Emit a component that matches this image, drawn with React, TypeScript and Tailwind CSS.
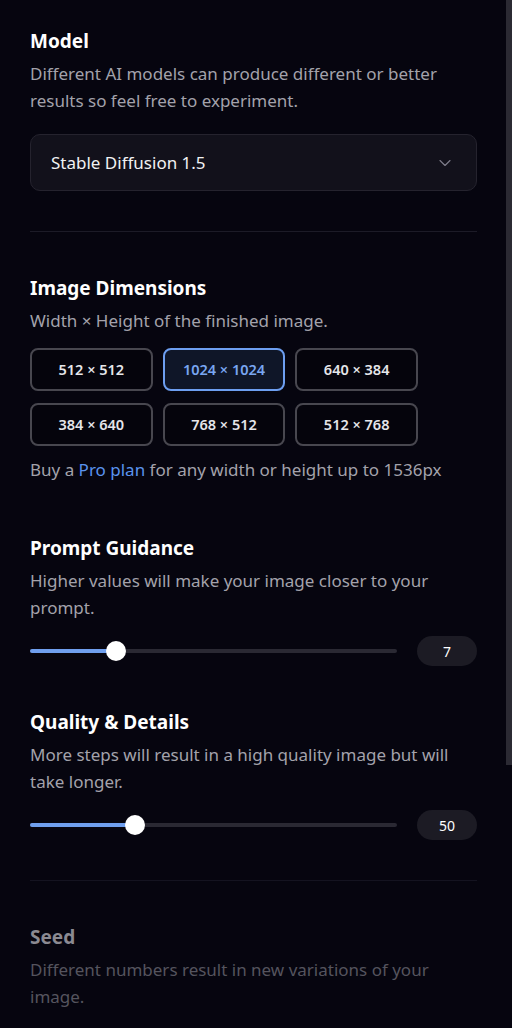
import React from "react";
import { ChevronDown } from "lucide-react";

const font = { fontFamily: '"Noto Sans", "Open Sans", sans-serif' };

function Title({ children, dim }: { children: React.ReactNode; dim?: boolean }) {
  return (
    <h2 className={`text-[19px] leading-[26px] font-bold ${dim ? "text-[#8b8a92]" : "text-white"}`}>{children}</h2>
  );
}

function Desc({ children, dim }: { children: React.ReactNode; dim?: boolean }) {
  return (
    <p className={`mt-[6px] text-[17px] leading-[27px] ${dim ? "text-[#55545e]" : "text-[#a3a2ab]"}`}>{children}</p>
  );
}

function Slider({ pct, value }: { pct: number; value: string }) {
  return (
    <div className="mt-[15px] flex items-center gap-5">
      <div className="relative h-[4px] flex-1 rounded-full bg-[#2a2933]">
        <div className="h-full rounded-full bg-[#6f9fee]" style={{ width: `${pct}%` }} />
        <div
          className="absolute top-1/2 h-[20px] w-[20px] -translate-x-1/2 -translate-y-1/2 rounded-full bg-white"
          style={{ left: `${pct}%` }}
        />
      </div>
      <div className="flex h-[30px] w-[60px] items-center justify-center rounded-full bg-[#1c1b24] text-[14px] text-white">
        {value}
      </div>
    </div>
  );
}

const sizes = ["512 × 512", "1024 × 1024", "640 × 384", "384 × 640", "768 × 512", "512 × 768"];

export default function App() {
  return (
    <div className="flex min-h-[1028px] w-[512px] bg-[#06050f]" style={font}>
      <div className="flex-1 pl-[30px] pr-[29px] pt-[28px]">
        <Title>Model</Title>
        <Desc>Different AI models can produce different or better results so feel free to experiment.</Desc>
        <div className="mt-[20px] flex h-[57px] items-center justify-between rounded-[10px] border border-[#25232e] bg-[#12111b] pl-[20px] pr-[21px]">
          <span className="text-[17px] text-[#f1f1f3]">Stable Diffusion 1.5</span>
          <ChevronDown size={20} strokeWidth={1.4} className="text-[#7d7b88]" />
        </div>

        <div className="mt-[40px] h-px bg-[#1c1b27]" />

        <div className="mt-[43px]">
          <Title>Image Dimensions</Title>
          <Desc>Width × Height of the finished image.</Desc>
          <div className="mt-[14px] grid w-[388px] grid-cols-3 gap-x-[10px] gap-y-[12px]">
            {sizes.map((s, i) => (
              <div
                key={s}
                className={`flex h-[43px] items-center justify-center rounded-[8px] border-2 text-[14.5px] font-semibold ${
                  i === 1
                    ? "border-[#6d9ef0] bg-[#0f1628] text-[#79a6f2]"
                    : "border-[#48474f] bg-[#05040c] text-[#e6e6ea]"
                }`}
              >
                {s}
              </div>
            ))}
          </div>
          <p className="mt-[10px] text-[17px] leading-[27px] text-[#a3a2ab]">
            Buy a <span className="text-[#5a93ee]">Pro plan</span> for any width or height up to 1536px
          </p>
        </div>

        <div className="mt-[52px]">
          <Title>Prompt Guidance</Title>
          <Desc>Higher values will make your image closer to your prompt.</Desc>
          <Slider pct={23.4} value="7" />
        </div>

        <div className="mt-[43px]">
          <Title>Quality &amp; Details</Title>
          <Desc>More steps will result in a high quality image but will take longer.</Desc>
          <Slider pct={28.6} value="50" />
        </div>

        <div className="mt-[40px] h-px bg-[#141320]" />

        <div className="mt-[43px]">
          <Title dim>Seed</Title>
          <Desc dim>Different numbers result in new variations of your image.</Desc>
        </div>
      </div>
      <div className="w-[6px] self-start h-[765px] bg-[#2b2a33]" />
    </div>
  );
}
